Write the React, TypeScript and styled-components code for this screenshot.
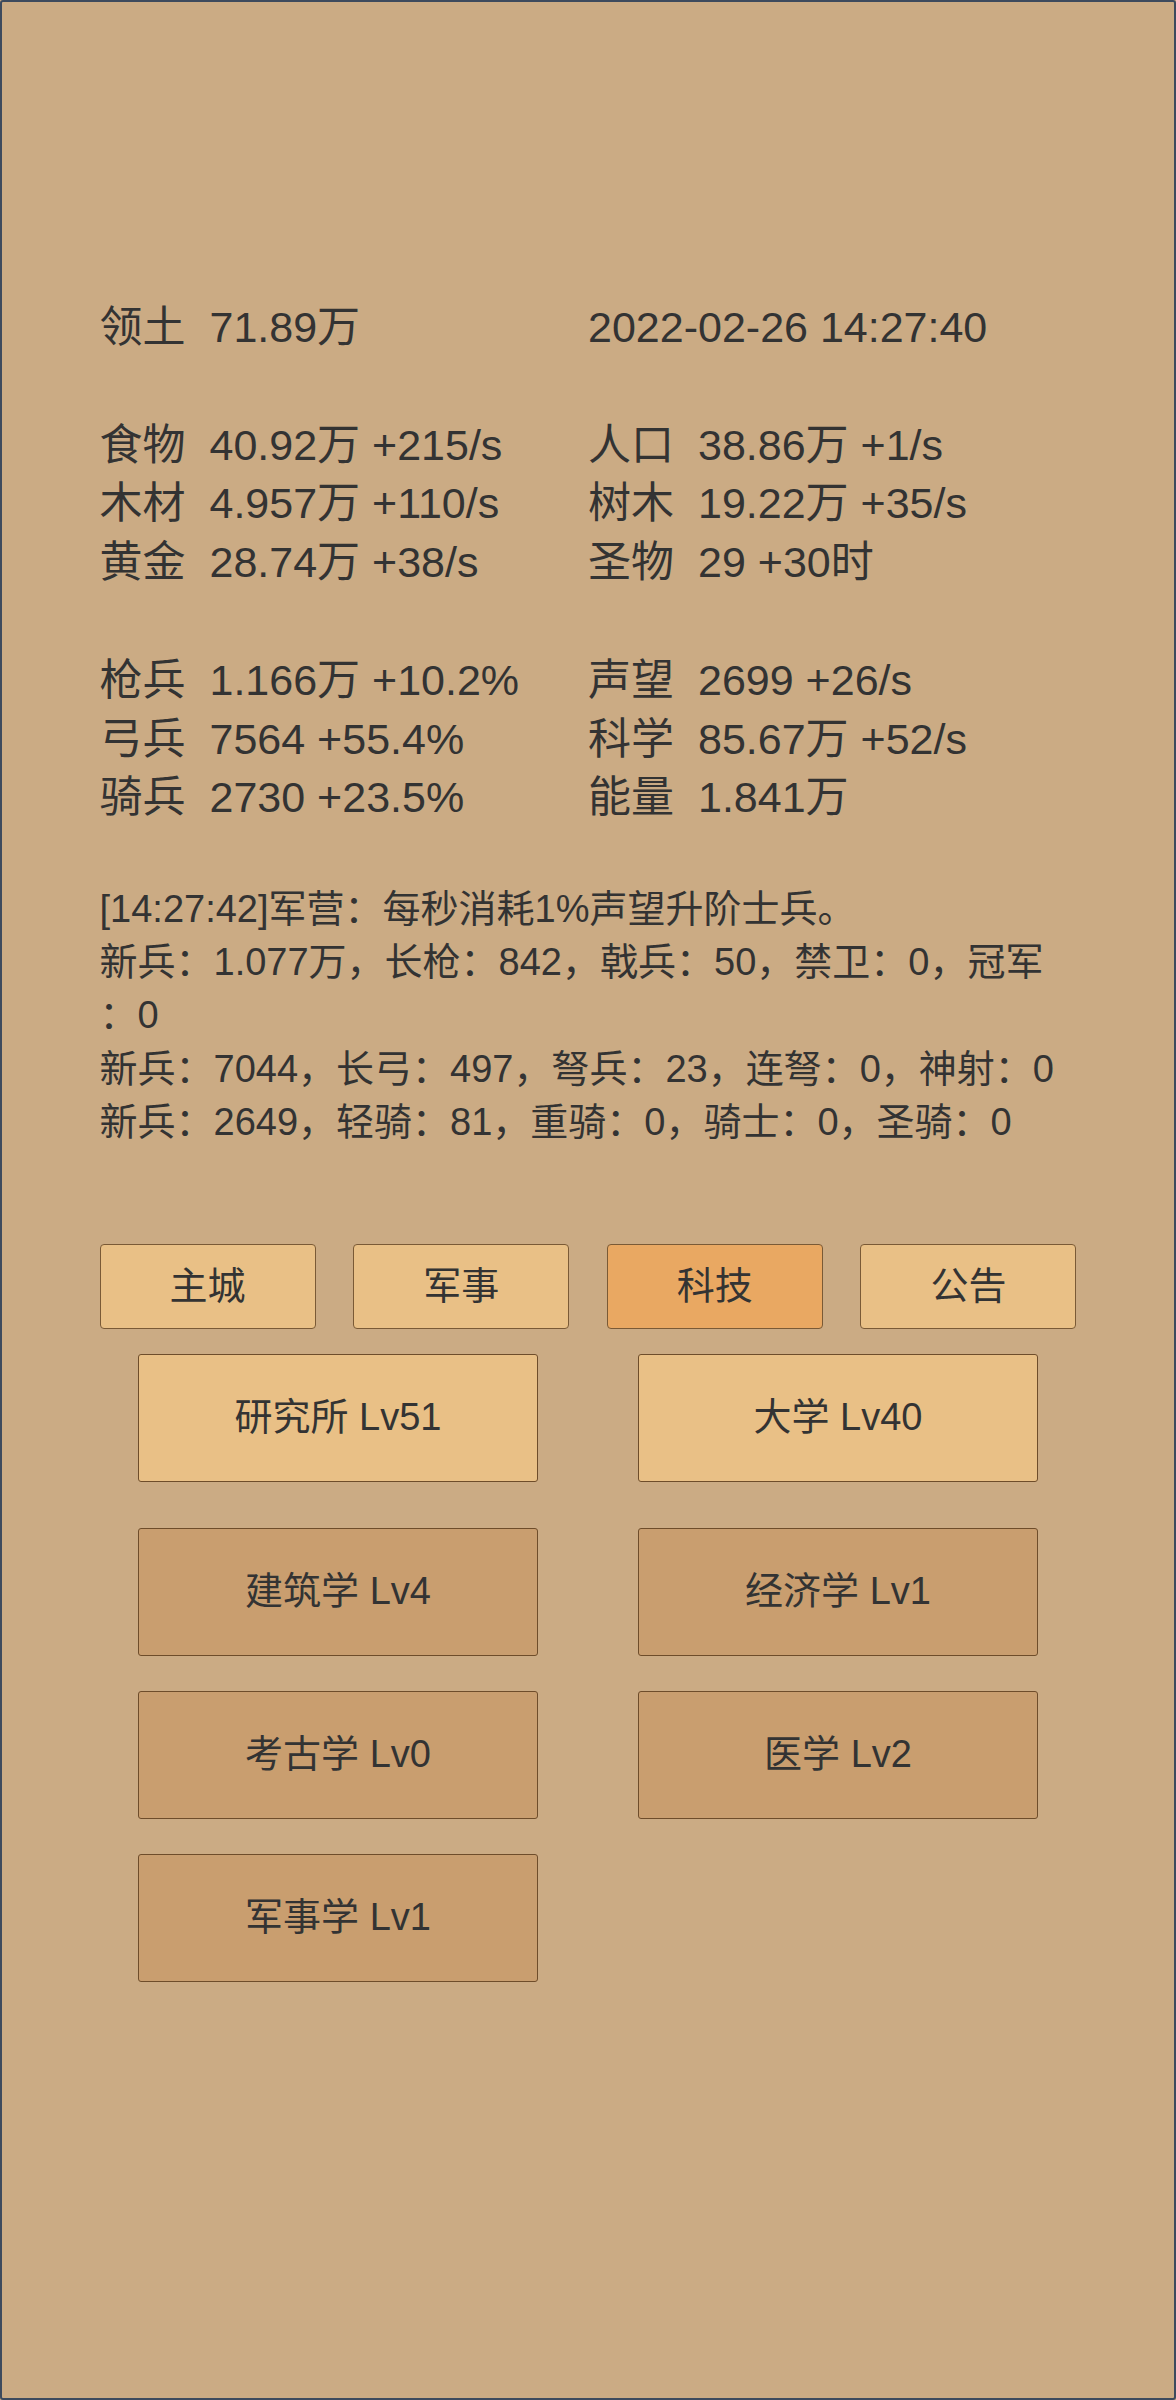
import React from "react";
import styled, { createGlobalStyle } from "styled-components";

const GlobalStyle = createGlobalStyle`
    body {
        margin: 0;
        background: #cbab84;
    }
`

interface Stat {
    label?: string;
    value: string;
}

const statBlocks: Stat[][][] = [
    [
        [{ label: "领土", value: "71.89万" }, { value: "2022-02-26 14:27:40" }],
    ],
    [
        [{ label: "食物", value: "40.92万 +215/s" }, { label: "人口", value: "38.86万 +1/s" }],
        [{ label: "木材", value: "4.957万 +110/s" }, { label: "树木", value: "19.22万 +35/s" }],
        [{ label: "黄金", value: "28.74万 +38/s" }, { label: "圣物", value: "29 +30时" }],
    ],
    [
        [{ label: "枪兵", value: "1.166万 +10.2%" }, { label: "声望", value: "2699 +26/s" }],
        [{ label: "弓兵", value: "7564 +55.4%" }, { label: "科学", value: "85.67万 +52/s" }],
        [{ label: "骑兵", value: "2730 +23.5%" }, { label: "能量", value: "1.841万" }],
    ],
];

const logLines = [
    "[14:27:42]军营：每秒消耗1%声望升阶士兵。",
    "新兵：1.077万，长枪：842，戟兵：50，禁卫：0，冠军：0",
    "新兵：7044，长弓：497，弩兵：23，连弩：0，神射：0",
    "新兵：2649，轻骑：81，重骑：0，骑士：0，圣骑：0",
];

const tabs = ["主城", "军事", "科技", "公告"];
const buildings = ["研究所 Lv51", "大学 Lv40"];
const techs = ["建筑学 Lv4", "经济学 Lv1", "考古学 Lv0", "医学 Lv2", "军事学 Lv1"];

const App = () => {
    return (
        <>
            <GlobalStyle />
            <Frame>
                {statBlocks.map((block, i) => (
                    <StatBlock key={i}>
                        {block.map((row, j) =>
                            row.map((cell, k) => (
                                <Cell key={`${j}-${k}`}>
                                    {cell.label && <Label>{cell.label}</Label>}
                                    <span>{cell.value}</span>
                                </Cell>
                            ))
                        )}
                    </StatBlock>
                ))}

                <Log>
                    {logLines.map((line, i) => (
                        <p key={i}>{line}</p>
                    ))}
                </Log>

                <Tabs>
                    {tabs.map((t) => (
                        <Tab key={t} active={t === "科技"}>{t}</Tab>
                    ))}
                </Tabs>

                <TechGrid>
                    {buildings.map((b) => (
                        <TechButton key={b} built>{b}</TechButton>
                    ))}
                </TechGrid>
                <TechGrid>
                    {techs.map((t) => (
                        <TechButton key={t}>{t}</TechButton>
                    ))}
                </TechGrid>
            </Frame>
        </>
    )
}

const Frame = styled.div`
    width: 1176px;
    height: 2400px;
    box-sizing: border-box;
    border: 2px solid #3d4a5d;
    border-radius: 3px;
    background: #cbab84;
    padding: 296px 97.5px 0;
    color: #333333;
    font-family: "Liberation Sans", "Noto Sans CJK SC", sans-serif;
    font-size: 43px;
    line-height: 58.8px;
`

const StatBlock = styled.div`
    display: grid;
    grid-template-columns: 1fr 1fr;
    & + & {
        margin-top: 58.8px;
    }
`

const Cell = styled.div`
    display: flex;
    white-space: nowrap;
`

const Label = styled.span`
    margin-right: 24px;
`

const Log = styled.div`
    margin-top: 55.8px;
    font-size: 38px;
    line-height: 53.2px;
    line-break: anywhere;
    p {
        margin: 0;
    }
`

const Tabs = styled.div`
    margin-top: 95.5px;
    display: flex;
    justify-content: space-between;
`

const Tab = styled.div<{ active?: boolean }>`
    width: 216px;
    height: 84.5px;
    box-sizing: border-box;
    display: flex;
    align-items: center;
    justify-content: center;
    border: 1px solid #7a5a36;
    border-radius: 4px;
    background: ${(p) => (p.active ? "#e9a862" : "#e9c086")};
    font-size: 38px;
`

const TechGrid = styled.div`
    margin: 24.6px auto 0;
    width: 900px;
    display: grid;
    grid-template-columns: 400px 400px;
    column-gap: 100px;
    row-gap: 35px;
    & + & {
        margin-top: 46px;
    }
`

const TechButton = styled.div<{ built?: boolean }>`
    height: 128px;
    box-sizing: border-box;
    display: flex;
    align-items: center;
    justify-content: center;
    border: 1px solid #6e4d2b;
    border-radius: 3px;
    background: ${(p) => (p.built ? "#e9c086" : "#c99e6f")};
    font-size: 38px;
`

export default App;
